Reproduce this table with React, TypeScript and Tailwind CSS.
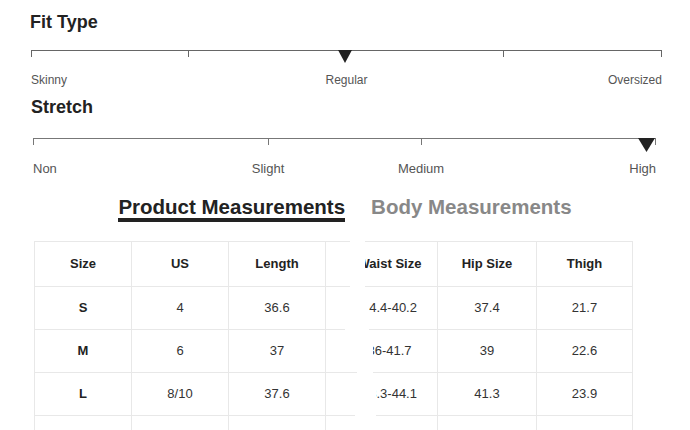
import React from "react";

type RowDef = {
  cells: string[];
  head?: boolean;
  left: string;
  right: string;
  inner: string;
};

const rows: RowDef[] = [
  {
    cells: ["Size", "US", "Length", "Waist Size", "Hip Size", "Thigh"],
    head: true,
    left: "w-[316px] h-[46px] border-t border-b",
    right: "ml-[15px] w-[268px] h-[46px] border-t border-b",
    inner: "-ml-[23px]",
  },
  {
    cells: ["S", "4", "36.6", "34.4-40.2", "37.4", "21.7"],
    left: "w-[311px] h-[43px] border-b",
    right: "ml-[24px] w-[264px] h-[43px] border-b",
    inner: "-ml-[27px]",
  },
  {
    cells: ["M", "6", "37", "36-41.7", "39", "22.6"],
    left: "w-[323px] h-[43px] border-b",
    right: "ml-[16px] w-[260px] h-[43px] border-b",
    inner: "-ml-[31px]",
  },
  {
    cells: ["L", "8/10", "37.6", "38.3-44.1", "41.3", "23.9"],
    left: "w-[321px] h-[43px] border-b",
    right: "ml-[21px] w-[257px] h-[43px] border-b",
    inner: "-ml-[34px]",
  },
  {
    cells: ["XL", "12", "38.2", "41.3-47.6", "44.1", "25.2"],
    left: "w-[321px] h-[43px] border-b",
    right: "ml-[22px] w-[256px] h-[43px] border-b",
    inner: "-ml-[35px]",
  },
];

function TRow({ r }: { r: RowDef }) {
  const txt = r.head
    ? "text-[13px] font-bold text-[#222]"
    : "text-[13px] text-[#333]";
  const first = "text-[13px] font-bold text-[#222]";
  return (
    <div className="flex">
      <div
        className={`${r.left} shrink-0 overflow-hidden border-[#e8e8e8] flex`}
      >
        <div
          className={`w-[97px] h-full shrink-0 border-l border-[#e8e8e8] flex items-center justify-center ${first}`}
        >
          {r.cells[0]}
        </div>
        <div
          className={`w-[97px] h-full shrink-0 border-l border-[#e8e8e8] flex items-center justify-center ${txt}`}
        >
          {r.cells[1]}
        </div>
        <div
          className={`w-[97px] h-full shrink-0 border-l border-[#e8e8e8] flex items-center justify-center ${txt}`}
        >
          {r.cells[2]}
        </div>
        <div className="w-[97px] h-full shrink-0 border-l border-[#e8e8e8]" />
      </div>
      <div
        className={`${r.right} shrink-0 overflow-hidden border-[#e8e8e8]`}
      >
        <div className={`${r.inner} flex h-full`}>
          <div
            className={`w-[95px] h-full shrink-0 flex items-center justify-center whitespace-nowrap ${txt}`}
          >
            {r.cells[3]}
          </div>
          <div
            className={`w-[99px] h-full shrink-0 border-l border-[#e8e8e8] flex items-center justify-center ${txt}`}
          >
            {r.cells[4]}
          </div>
          <div
            className={`w-[97px] h-full shrink-0 border-l border-r border-[#e8e8e8] flex items-center justify-center ${txt}`}
          >
            {r.cells[5]}
          </div>
        </div>
      </div>
    </div>
  );
}

export default function App() {
  return (
    <div className="h-[430px] w-[690px] overflow-hidden bg-white font-['Liberation_Sans',Arial,sans-serif] text-[#222]">
      <div className="pt-[12px] pl-[30px] text-[18px] leading-[20px] font-bold text-[#222]">
        Fit Type
      </div>
      <div className="relative mt-[18px] ml-[31px] w-[631px] h-[7px] border-t border-[#666] flex">
        <div className="w-[157px] h-[6px] border-l border-[#666]" />
        <div className="w-[158px] h-[6px] border-l border-[#666]" />
        <div className="w-[157px] h-[6px] border-l border-[#666]" />
        <div className="w-[159px] h-[6px] border-l border-r border-[#666]" />
        <svg
          className="absolute left-[307px] top-[-1px]"
          width="14"
          height="13"
          viewBox="0 0 14 13"
        >
          <polygon points="0,0 14,0 7,13" fill="#222" />
        </svg>
      </div>
      <div className="mt-[16px] ml-[31px] w-[631px] grid grid-cols-3 text-[12px] leading-[14px] text-[#555]">
        <span className="text-left">Skinny</span>
        <span className="text-center">Regular</span>
        <span className="text-right">Oversized</span>
      </div>

      <div className="mt-[10px] pl-[31px] text-[18px] leading-[20px] font-bold text-[#222]">
        Stretch
      </div>
      <div className="relative mt-[21px] ml-[33px] w-[623px] h-[7px] border-t border-[#777] flex">
        <div className="w-[235px] h-[6px] border-l border-[#777]" />
        <div className="w-[153px] h-[6px] border-l border-[#777]" />
        <div className="w-[235px] h-[6px] border-l border-r border-[#777]" />
        <svg
          className="absolute left-[605px] top-[-1px]"
          width="17"
          height="14"
          viewBox="0 0 17 14"
        >
          <polygon points="0,0 17,0 8.5,14" fill="#222" />
        </svg>
      </div>
      <div className="mt-[16px] ml-[33px] w-[623px] grid grid-cols-[159px_152px_154px_158px] text-[13px] leading-[15px] text-[#555]">
        <span className="text-left">Non</span>
        <span className="text-center">Slight</span>
        <span className="text-center">Medium</span>
        <span className="text-right">High</span>
      </div>

      <div className="mt-[20px] flex justify-center gap-[26px] text-[20.5px] leading-[22px] font-bold">
        <div className="border-b-[4px] border-[#222] text-[#222]">
          Product Measurements
        </div>
        <div className="border-b-[4px] border-transparent text-[#888]">
          Body Measurements
        </div>
      </div>

      <div className="mt-[19px] ml-[34px] flex flex-col">
        {rows.map((r, i) => (
          <TRow key={i} r={r} />
        ))}
      </div>
    </div>
  );
}
